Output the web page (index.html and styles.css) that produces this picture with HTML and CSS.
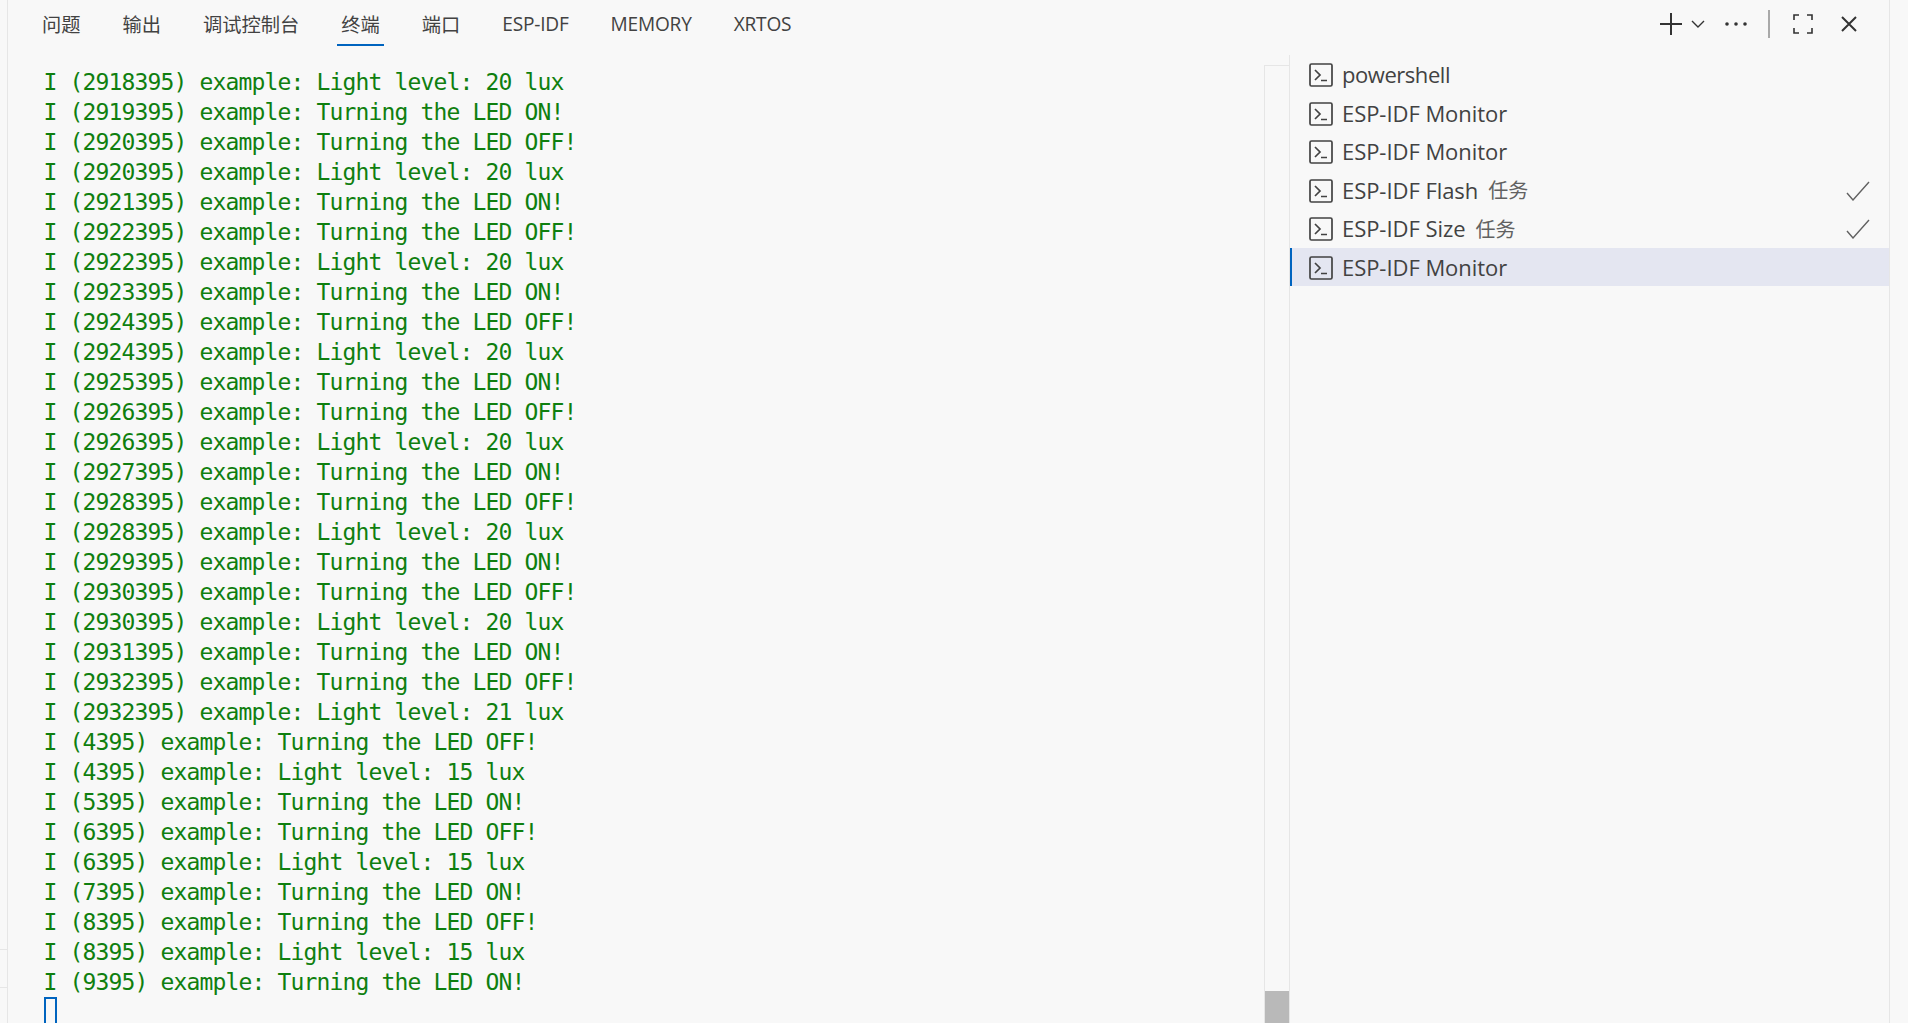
FILE: index.html
```html
<!DOCTYPE html>
<html lang="zh-CN">
<head>
<meta charset="utf-8">
<title>终端</title>
<link rel="stylesheet" href="styles.css">
</head>
<body>
<div class="page">
  <div class="gutter">
    <div class="gutter-a"></div>
    <div class="gutter-b"></div>
  </div>
  <div class="panel">
    <header class="topbar">
      <nav class="tabs">
        <span class="tab">问题</span>
        <span class="tab">输出</span>
        <span class="tab">调试控制台</span>
        <span class="tab active">终端</span>
        <span class="tab">端口</span>
        <span class="tab latin">ESP-IDF</span>
        <span class="tab latin">MEMORY</span>
        <span class="tab latin">XRTOS</span>
      </nav>
      <div class="actions">
        <svg class="i-plus" width="24" height="24" viewBox="0 0 24 24"><path d="M12 1v22M1 12h22"/></svg>
        <svg class="i-chev" width="14" height="8" viewBox="0 0 14 8"><path d="M1 1l6 6 6-6"/></svg>
        <svg class="i-dots" width="22" height="4" viewBox="0 0 22 4"><circle cx="2" cy="2" r="1.8"/><circle cx="11" cy="2" r="1.8"/><circle cx="20" cy="2" r="1.8"/></svg>
        <span class="sep"></span>
        <svg class="i-full" width="20" height="20" viewBox="0 0 20 20"><path d="M1 6V1h5M14 1h5v5M19 14v5h-5M6 19H1v-5"/></svg>
        <svg class="i-close" width="16" height="16" viewBox="0 0 16 16"><path d="M1 1l14 14M15 1L1 15"/></svg>
      </div>
    </header>
    <div class="body">
      <main class="term">
        <div class="line">I (2918395) example: Light level: 20 lux</div>
        <div class="line">I (2919395) example: Turning the LED ON!</div>
        <div class="line">I (2920395) example: Turning the LED OFF!</div>
        <div class="line">I (2920395) example: Light level: 20 lux</div>
        <div class="line">I (2921395) example: Turning the LED ON!</div>
        <div class="line">I (2922395) example: Turning the LED OFF!</div>
        <div class="line">I (2922395) example: Light level: 20 lux</div>
        <div class="line">I (2923395) example: Turning the LED ON!</div>
        <div class="line">I (2924395) example: Turning the LED OFF!</div>
        <div class="line">I (2924395) example: Light level: 20 lux</div>
        <div class="line">I (2925395) example: Turning the LED ON!</div>
        <div class="line">I (2926395) example: Turning the LED OFF!</div>
        <div class="line">I (2926395) example: Light level: 20 lux</div>
        <div class="line">I (2927395) example: Turning the LED ON!</div>
        <div class="line">I (2928395) example: Turning the LED OFF!</div>
        <div class="line">I (2928395) example: Light level: 20 lux</div>
        <div class="line">I (2929395) example: Turning the LED ON!</div>
        <div class="line">I (2930395) example: Turning the LED OFF!</div>
        <div class="line">I (2930395) example: Light level: 20 lux</div>
        <div class="line">I (2931395) example: Turning the LED ON!</div>
        <div class="line">I (2932395) example: Turning the LED OFF!</div>
        <div class="line">I (2932395) example: Light level: 21 lux</div>
        <div class="line">I (4395) example: Turning the LED OFF!</div>
        <div class="line">I (4395) example: Light level: 15 lux</div>
        <div class="line">I (5395) example: Turning the LED ON!</div>
        <div class="line">I (6395) example: Turning the LED OFF!</div>
        <div class="line">I (6395) example: Light level: 15 lux</div>
        <div class="line">I (7395) example: Turning the LED ON!</div>
        <div class="line">I (8395) example: Turning the LED OFF!</div>
        <div class="line">I (8395) example: Light level: 15 lux</div>
        <div class="line">I (9395) example: Turning the LED ON!</div>
        <div class="cursor"></div>
      </main>
      <div class="scroll">
        <div class="scroll-gap"></div>
        <div class="scroll-track"><div class="scroll-thumb"></div></div>
      </div>
      <aside class="list">
        <div class="row">
          <svg class="i-term" width="24" height="24" viewBox="0 0 24 24"><rect x="1" y="1" width="22" height="22" rx="1.5"/><path d="M6 7l5 5-5 5M12 17.500h6"/></svg>
          <span class="name tight">powershell</span>
        </div>
        <div class="row">
          <svg class="i-term" width="24" height="24" viewBox="0 0 24 24"><rect x="1" y="1" width="22" height="22" rx="1.5"/><path d="M6 7l5 5-5 5M12 17.500h6"/></svg>
          <span class="name">ESP-IDF Monitor</span>
        </div>
        <div class="row">
          <svg class="i-term" width="24" height="24" viewBox="0 0 24 24"><rect x="1" y="1" width="22" height="22" rx="1.5"/><path d="M6 7l5 5-5 5M12 17.500h6"/></svg>
          <span class="name">ESP-IDF Monitor</span>
        </div>
        <div class="row">
          <svg class="i-term" width="24" height="24" viewBox="0 0 24 24"><rect x="1" y="1" width="22" height="22" rx="1.5"/><path d="M6 7l5 5-5 5M12 17.500h6"/></svg>
          <span class="name">ESP-IDF Flash</span><span class="desc">任务</span>
          <svg class="i-check" width="24" height="20" viewBox="0 0 24 20"><path d="M1 12l6 7L23 1"/></svg>
        </div>
        <div class="row">
          <svg class="i-term" width="24" height="24" viewBox="0 0 24 24"><rect x="1" y="1" width="22" height="22" rx="1.5"/><path d="M6 7l5 5-5 5M12 17.500h6"/></svg>
          <span class="name">ESP-IDF Size</span><span class="desc">任务</span>
          <svg class="i-check" width="24" height="20" viewBox="0 0 24 20"><path d="M1 12l6 7L23 1"/></svg>
        </div>
        <div class="row selected">
          <svg class="i-term" width="24" height="24" viewBox="0 0 24 24"><rect x="1" y="1" width="22" height="22" rx="1.5"/><path d="M6 7l5 5-5 5M12 17.500h6"/></svg>
          <span class="name">ESP-IDF Monitor</span>
        </div>
      </aside>
    </div>
  </div>
</div>
</body>
</html>
```
FILE: styles.css
```css
* { box-sizing: border-box; }
html, body { margin: 0; height: 100%; overflow: hidden; }
body {
  background: #f8f8f8;
  color: #424242;
  font-family: "Open Sans", "Noto Sans CJK SC", sans-serif;
}
.page { display: flex; height: 1023px; overflow: hidden; }

.gutter {
  width: 8px;
  flex: none;
  border-right: 1px solid #e6e6e6;
  padding-top: 949px;
}
.gutter-a { height: 38px; border-top: 1px solid #e6e6e6; }
.gutter-b { height: 10px; border-top: 1px solid #e6e6e6; }

.panel {
  width: 1882px;
  flex: none;
  display: flex;
  flex-direction: column;
  border-right: 1px solid #e6e6e6;
}

.topbar { height: 55px; flex: none; display: flex; justify-content: space-between; }
.tabs { display: flex; gap: 34px; padding-left: 30px; height: 46px; }
.tab {
  padding: 0 4px;
  font-size: 19.25px;
  line-height: 49px;
  height: 46px;
  white-space: nowrap;
  border-bottom: 2px solid transparent;
}
.tab.latin { font-size: 19.1px; letter-spacing: -0.2px; }
.tab.active { border-bottom-color: #0064bf; }

.actions { display: flex; align-items: center; height: 48px; padding-right: 32px; }
.actions svg { flex: none; fill: none; stroke: #333; stroke-width: 2; display: block; }
.i-plus { margin-right: 8px; }
.actions .i-chev { stroke-width: 1.4; margin-right: 20px; }
.actions .i-dots { fill: #333; stroke: none; margin-right: 21px; }
.sep { width: 2px; height: 28px; background: #a9a9a9; margin-right: 23px; }
.actions .i-full { margin-right: 28px; stroke-width: 1.6; }

.body { flex: 1; min-height: 0; display: flex; }
.term {
  width: 1256px;
  flex: none;
  padding: 12px 0 0 35.5px;
  color: #0f7f0f;
  font-family: "DejaVu Sans Mono", monospace;
  font-size: 23px;
  letter-spacing: -0.846px;
  line-height: 30px;
  overflow: hidden;
}
.line { white-space: pre; }
.cursor { width: 13px; height: 30px; border: 2px solid #0064bf; }

.scroll {
  width: 26px;
  flex: none;
  display: flex;
  flex-direction: column;
  border-right: 1px solid #e6e6e6;
}
.scroll-gap { height: 10px; flex: none; }
.scroll-track {
  flex: 1;
  display: flex;
  flex-direction: column;
  justify-content: flex-end;
  border-top: 1px solid #e6e6e6;
  border-left: 1px solid #e6e6e6;
}
.scroll-thumb { height: 32px; background: #b9b9b9; }

.list { flex: 1; min-width: 0; }
.row {
  height: 38.5px;
  display: flex;
  align-items: center;
  padding: 0 19px 0 19px;
  font-size: 22px;
  white-space: nowrap;
}
.row.selected {
  background: #e4e6f1;
  border-left: 2px solid #0064bf;
  padding-left: 17px;
}
.i-term { flex: none; fill: none; stroke: #424242; stroke-width: 1.7; margin: 2px 9px 0 0; }
.name { letter-spacing: -0.05px; }
.name.tight { letter-spacing: -0.45px; }
.desc { margin-left: 10px; font-size: 20px; color: #616161; }
.i-check { flex: none; margin: 2px 0 0 auto; fill: none; stroke: #616161; stroke-width: 1.4; }
```
